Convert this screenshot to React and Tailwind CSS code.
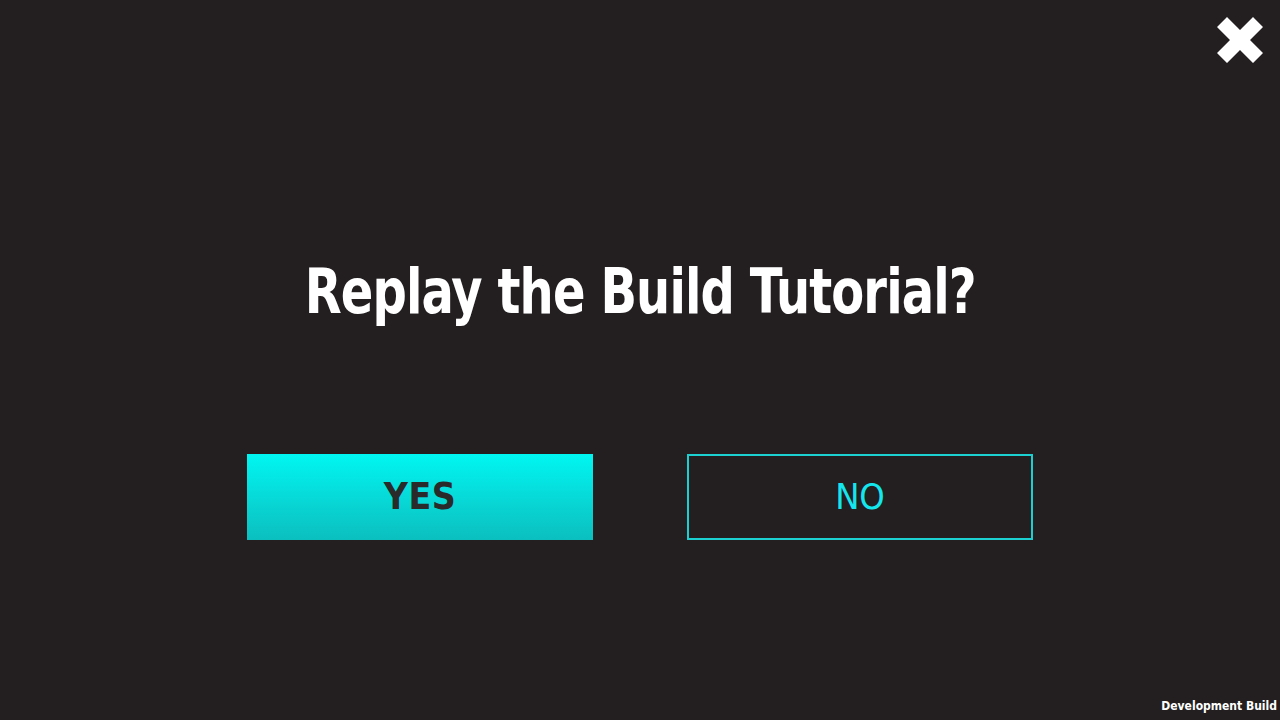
import { useState } from 'react';

const App = () => {
  const [choice, setChoice] = useState(null);

  return (
    <div
      className="relative w-[1280px] h-[720px] bg-[#231f20] overflow-hidden flex flex-col items-center"
      style={{ fontFamily: '"DejaVu Sans Condensed", "DejaVu Sans", sans-serif' }}
    >
      {/* Close */}
      <button className="absolute top-[16px] right-[16px] w-[48px] h-[48px]" aria-label="Close">
        <svg viewBox="0 0 48 48" className="w-full h-full">
          <path d="M1 11 L11 1 L24 14 L37 1 L47 11 L34 24 L47 37 L37 47 L24 34 L11 47 L1 37 L14 24 Z" fill="#ffffff" />
        </svg>
      </button>

      <h1 className="mt-[256px] text-[62px] leading-[72px] font-bold text-white tracking-[-1px] scale-x-[0.86]">
        Replay the Build Tutorial?
      </h1>

      <div className="mt-[126px] flex gap-[94px]">
        <button
          onClick={() => setChoice('yes')}
          className="w-[346px] h-[86px] bg-gradient-to-b from-[#00f6f2] to-[#0bbfbf] flex items-center justify-center text-[37px] font-bold text-[#2a2a2a] tracking-[0.5px]"
        >
          YES
        </button>
        <button
          onClick={() => setChoice('no')}
          className="w-[346px] h-[86px] border-2 border-[#1ccfd0] flex items-center justify-center text-[36px] text-[#14e6ee]"
        >
          NO
        </button>
      </div>

      <div className="absolute right-[3px] bottom-[7px] text-[12px] leading-[14px] font-bold text-white">
        Development Build
      </div>
    </div>
  );
};

export default App;
